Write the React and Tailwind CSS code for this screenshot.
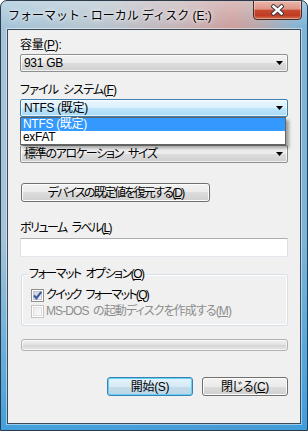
import React from "react";

const FONT = "font-['Liberation_Sans','Noto_Sans_CJK_JP',sans-serif]";

function Arrow() {
  return (
    <svg width="7" height="4" viewBox="0 0 7 4" className="shrink-0">
      <path d="M0 0H7L3.5 4Z" fill="#000" />
    </svg>
  );
}

function Combo({ children, focused, textClass = "" }) {
  return (
    <div
      className={
        "h-[18px] flex items-center justify-between pl-[3px] pr-[4px] rounded-[2px] border shadow-[inset_0_0_0_1px_rgba(255,255,255,0.7)] " +
        (focused
          ? "border-[#3c7fb1] bg-[linear-gradient(#eaf6fd_0%,#d9f0fc_50%,#bee6fd_50%,#a7d9f5_100%)]"
          : "border-[#8e8f8f] bg-[linear-gradient(#f2f2f2_0%,#ebebeb_50%,#dddddd_50%,#cfcfcf_100%)]")
      }
    >
      <span className={"leading-[14px] whitespace-nowrap " + textClass}>{children}</span>
      <Arrow />
    </div>
  );
}

function Button({ children, className = "", isDefault }) {
  return (
    <div
      className={
        "h-[19px] flex items-center justify-center rounded-[3px] border leading-[14px] whitespace-nowrap " +
        (isDefault
          ? "border-[#3c7fb1] shadow-[inset_0_0_0_1px_#62d2f7] bg-[linear-gradient(#e5f3fa_0%,#d6e9f4_50%,#c4dcea_50%,#bcd6e6_100%)] "
          : "border-[#707070] shadow-[inset_0_0_0_1px_#fcfcfc] bg-[linear-gradient(#f2f2f2_0%,#ebebeb_50%,#dddddd_50%,#cfcfcf_100%)] ") +
        className
      }
    >
      {children}
    </div>
  );
}

function CheckBox({ checked, disabled }) {
  return (
    <svg width="13" height="13" viewBox="0 0 13 13" className="shrink-0">
      <defs>
        <linearGradient id={disabled ? "cbd" : "cbe"} x1="0" y1="0" x2="1" y2="1">
          <stop offset="0" stopColor={disabled ? "#ececec" : "#cbcfd5"} />
          <stop offset="1" stopColor={disabled ? "#f8f8f8" : "#f6f6f6"} />
        </linearGradient>
      </defs>
      <rect x="0.5" y="0.5" width="12" height="12" fill="#fff" stroke={disabled ? "#c4c4c4" : "#8e8f8f"} />
      <rect x="2.5" y="2.5" width="8" height="8" fill={`url(#${disabled ? "cbd" : "cbe"})`} stroke={disabled ? "#e0e0e0" : "#c2c6cc"} />
      {checked && (
        <path d="M3 6.3 L5.4 9.2 L10.2 2.8" fill="none" stroke="#3a59a6" strokeWidth="2.1" strokeLinejoin="miter" />
      )}
    </svg>
  );
}

export default function App() {
  return (
    <div
      className={
        "w-[308px] h-[431px] flex flex-col overflow-hidden rounded-t-[7px] border border-[#2c3b49] text-[12px] leading-[14px] text-black " +
        FONT +
        " bg-[linear-gradient(180deg,rgba(255,255,255,0.3)_0px,rgba(255,255,255,0)_26px,rgba(60,160,225,0)_55%,rgba(55,155,220,0.9)_100%),linear-gradient(90deg,#a4c4d9_0%,#b7c6d1_30%,#c5b5b9_58%,#cc9f9d_76%,#b4aab2_86%,#78b7dc_100%)]"
      }
    >
      {/* Title bar */}
      <div className="h-[28px] shrink-0 flex items-start justify-between">
        <div className="pl-[7px] pt-[8px] whitespace-nowrap [text-shadow:0_0_6px_rgba(255,255,255,0.95),0_0_3px_rgba(255,255,255,0.9)]">
          フォーマット - ローカル ディスク (E:)
        </div>
        <div className="-mt-[1px] mr-[5px] w-[49px] h-[20px] rounded-b-[4px] border border-[#4a2a25] shadow-[inset_0_0_0_1px_rgba(255,255,255,0.35)] bg-[linear-gradient(#e9b6ab_0%,#dd9585_45%,#c6492f_52%,#c03b22_80%,#d8714f_100%)] flex items-center justify-center">
          <svg width="13" height="12" viewBox="0 0 13 12">
            <path d="M2.5 2.5 L10.5 9.5 M10.5 2.5 L2.5 9.5" stroke="#3b3b3b" strokeWidth="4.4" strokeLinecap="square" />
            <path d="M2.5 2.5 L10.5 9.5 M10.5 2.5 L2.5 9.5" stroke="#fff" strokeWidth="2.4" strokeLinecap="square" />
          </svg>
        </div>
      </div>

      {/* Client area */}
      <div className="flex-1 mx-[6px] mb-[6px] border border-[#3a4a59] shadow-[0_0_0_1px_rgba(255,255,255,0.45)] bg-[#f0f0f0] px-[12px] pt-[8px] flex flex-col [font-feature-settings:'palt'] tracking-[-0.3px]">
        <div>
          容量(<u>P</u>):
        </div>
        <div className="mt-[2px]">
          <Combo>931 GB</Combo>
        </div>

        <div className="mt-[11px] tracking-[-0.8px] [word-spacing:2px]">
          ファイル システム(<u>F</u>)
        </div>
        <div className="mt-[2px] relative">
          <Combo focused>NTFS (既定)</Combo>
          <div className="absolute z-10 left-0 top-full w-[266px] border border-[#646464] bg-white shadow-[3px_3px_3px_rgba(0,0,0,0.35)]">
            <div className="h-[13px] pl-[2px] leading-[13px] bg-[#3399ff] text-white">NTFS (既定)</div>
            <div className="h-[13px] pl-[2px] leading-[13px]">exFAT</div>
          </div>
        </div>

        {/* label hidden beneath the open list */}
        <div className="mt-[11px] h-[14px]" aria-hidden="true" />
        <div className="mt-[3px]">
          <Combo textClass="tracking-[-1.3px] [word-spacing:3px]">標準のアロケーション サイズ</Combo>
        </div>

        <div className="mt-[20px] flex">
          <Button className="ml-[1px] w-[189px] tracking-[-1.8px]">
            デバイスの既定値を復元する(<u>D</u>)
          </Button>
        </div>

        <div className="mt-[19px] tracking-[-1.5px] [word-spacing:3px]">
          ボリューム ラベル(<u>L</u>)
        </div>
        <div className="mt-[3px] h-[19px] bg-white border border-[#abadb3] border-l-[#dbdfe6] border-r-[#dbdfe6] border-b-[#e3e9ef]" />

        <div className="mt-[17px] ml-[1px] relative rounded-[3px] border border-[#d5dfe5] shadow-[inset_0_0_0_1px_#ffffff] pt-[12px] pb-[6px] pl-[9px]">
          <div className="absolute -top-[8px] left-[5px] px-[2px] bg-[#f0f0f0] whitespace-nowrap tracking-[-1.5px] [word-spacing:3px]">
            フォーマット オプション(<u>O</u>)
          </div>
          <div className="h-[16px] flex items-center gap-[2px]">
            <CheckBox checked />
            <span className="tracking-[-1.7px] [word-spacing:3px]">
              クイック フォーマット(<u>Q</u>)
            </span>
          </div>
          <div className="h-[16px] flex items-center gap-[2px] text-[#8d8d8d]">
            <CheckBox disabled />
            <span className="tracking-[-0.9px] [word-spacing:2px]">
              MS-DOS の起動ディスクを作成する(<u>M</u>)
            </span>
          </div>
        </div>

        <div className="mt-[13px] ml-[1px] h-[12px] rounded-[3px] border border-[#b2b2b2] shadow-[inset_0_0_0_1px_rgba(255,255,255,0.6)] bg-[linear-gradient(#f3f3f3_0%,#e2e2e2_45%,#d6d6d6_55%,#e6e6e6_100%)]" />

        <div className="mt-[26px] flex justify-end gap-[9px]">
          <Button isDefault className="w-[86px]">
            開始(S)
          </Button>
          <Button className="w-[86px]">
            閉じる(<u>C</u>)
          </Button>
        </div>
      </div>
    </div>
  );
}
